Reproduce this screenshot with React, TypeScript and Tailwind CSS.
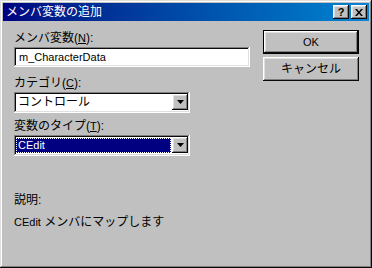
import React from "react";

const raised =
  "shadow-[inset_-1px_-1px_#0a0a0a,inset_1px_1px_#ffffff,inset_-2px_-2px_#808080,inset_2px_2px_#dfdfdf]";
const sunken =
  "shadow-[inset_-1px_-1px_#ffffff,inset_1px_1px_#808080,inset_-2px_-2px_#dfdfdf,inset_2px_2px_#0a0a0a]";

function Arrow() {
  return (
    <div className={`w-[16px] h-[16px] bg-[#c0c0c0] flex items-center justify-center ${raised}`}>
      <svg width="7" height="4" viewBox="0 0 7 4">
        <path d="M0 0h7L3.5 4z" fill="#000" />
      </svg>
    </div>
  );
}

function Combo({ children, selected }: { children: React.ReactNode; selected?: boolean }) {
  return (
    <div className={`w-[176px] h-[21px] bg-white p-[2px] flex ${sunken}`}>
      <div className="flex-1 pr-[1px] py-[1px]">
        {selected ? (
          <div className="h-full bg-[#000080] text-white pl-[2px] leading-[15px] outline outline-1 outline-dotted outline-white -outline-offset-1">
            {children}
          </div>
        ) : (
          <div className="h-full pl-[2px] leading-[15px]">{children}</div>
        )}
      </div>
      <Arrow />
    </div>
  );
}

export default function App() {
  return (
    <div
      className="w-[372px] h-[268px] bg-[#c0c0c0] p-[3px] flex flex-col text-[12px] text-black shadow-[inset_-1px_-1px_#0a0a0a,inset_1px_1px_#dfdfdf,inset_-2px_-2px_#808080,inset_2px_2px_#ffffff]"
      style={{ fontFamily: '"Liberation Sans", "Noto Sans CJK JP", sans-serif' }}
    >
      <div className="h-[18px] bg-gradient-to-r from-[#000080] to-[#1084d0] flex items-center pl-[3px] pr-[2px]">
        <span className="text-white text-[12px] leading-none flex-1">メンバ変数の追加</span>
        <div className={`w-[16px] h-[14px] bg-[#c0c0c0] flex items-center justify-center font-bold text-[11px] leading-none ${raised}`}>
          ?
        </div>
        <div className={`ml-[2px] w-[16px] h-[14px] bg-[#c0c0c0] flex items-center justify-center ${raised}`}>
          <svg width="8" height="7" viewBox="0 0 8 7">
            <path d="M0 0h2l2 2.5L6 0h2L5 3.5 8 7H6L4 4.5 2 7H0l3-3.5z" fill="#000" />
          </svg>
        </div>
      </div>

      <div className="flex flex-1">
        <div className="pl-[11px] pt-[10px] flex flex-col w-[250px]">
          <div className="leading-[14px] h-[14px]">
            メンバ変数(<u className="text-[11px]">N</u>):
          </div>
          <div className={`mt-[2px] w-[236px] h-[20px] bg-white pl-[5px] leading-[20px] text-[11px] ${sunken}`}>
            m_CharacterData
          </div>
          <div className="mt-[9px] leading-[14px] h-[14px]">
            カテゴリ(<u className="text-[11px]">C</u>):
          </div>
          <div className="mt-[2px]">
            <Combo>コントロール</Combo>
          </div>
          <div className="mt-[6px] leading-[14px] h-[14px]">
            変数のタイプ(<u className="text-[11px]">T</u>):
          </div>
          <div className="mt-[2px]">
            <Combo selected>
              <span className="text-[11px]">CEdit</span>
            </Combo>
          </div>
          <div className="mt-[37px] leading-[14px]">説明:</div>
          <div className="mt-[8px] leading-[14px]">
            <span className="text-[11px]">CEdit</span> メンバにマップします
          </div>
        </div>

        <div className="pl-[10px] pt-[9px] flex flex-col gap-[3px]">
          <div className="w-[96px] h-[24px] border border-black">
            <div className={`w-full h-full bg-[#c0c0c0] flex items-center justify-center text-[11px] ${raised}`}>OK</div>
          </div>
          <div className={`w-[96px] h-[24px] bg-[#c0c0c0] flex items-center justify-center ${raised}`}>
            キャンセル
          </div>
        </div>
      </div>
    </div>
  );
}
